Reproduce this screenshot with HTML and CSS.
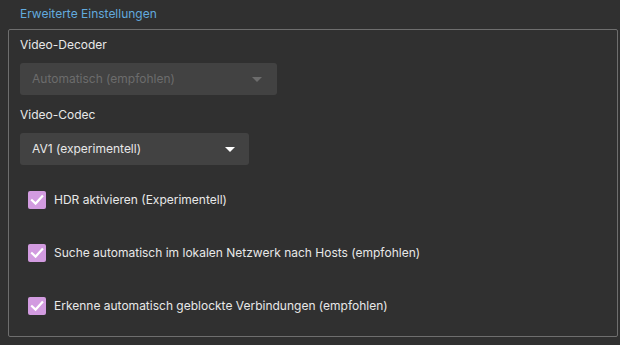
FILE: index.html
```html
<!DOCTYPE html>
<html lang="de">
<head>
<meta charset="utf-8">
<link rel="stylesheet" href="styles.css">
</head>
<body>
<div class="group-title">Erweiterte Einstellungen</div>
<div class="group">
  <div class="field-label">Video-Decoder</div>
  <div class="combo combo-disabled combo-decoder">
    <span class="combo-text">Automatisch (empfohlen)</span>
    <span class="combo-arrow"></span>
  </div>
  <div class="field-label">Video-Codec</div>
  <div class="combo combo-codec">
    <span class="combo-text">AV1 (experimentell)</span>
    <span class="combo-arrow"></span>
  </div>
  <div class="checks">
    <label class="check">
      <span class="box"><svg viewBox="0 0 18 18" width="18" height="18"><path d="M4 9.2 L7.6 12.6 L14.2 5.4" fill="none" stroke="#fff" stroke-width="2.2" stroke-linecap="square"/></svg></span>
      <span class="check-text">HDR aktivieren (Experimentell)</span>
    </label>
    <label class="check">
      <span class="box"><svg viewBox="0 0 18 18" width="18" height="18"><path d="M4 9.2 L7.6 12.6 L14.2 5.4" fill="none" stroke="#fff" stroke-width="2.2" stroke-linecap="square"/></svg></span>
      <span class="check-text">Suche automatisch im lokalen Netzwerk nach Hosts (empfohlen)</span>
    </label>
    <label class="check">
      <span class="box"><svg viewBox="0 0 18 18" width="18" height="18"><path d="M4 9.2 L7.6 12.6 L14.2 5.4" fill="none" stroke="#fff" stroke-width="2.2" stroke-linecap="square"/></svg></span>
      <span class="check-text">Erkenne automatisch geblockte Verbindungen (empfohlen)</span>
    </label>
  </div>
</div>
</body>
</html>
```

FILE: styles.css
```css
html, body {
  margin: 0;
  padding: 0;
  background: #303030;
}
body {
  font-family: Inter, "Noto Sans", sans-serif;
  font-size: 12px;
  line-height: 16px;
  color: #e8e8e8;
  width: 620px;
  height: 345px;
  overflow: hidden;
}
.group-title {
  color: #62aade;
  padding: 6px 0 0 20px;
  box-sizing: border-box;
  height: 29px;
}
.group {
  margin-left: 8px;
  border: 1px solid #6e6e6e;
  border-radius: 2px;
  padding: 7px 0 0 11px;
  display: flex;
  flex-direction: column;
  align-items: flex-start;
  box-sizing: border-box;
  width: 610px;
  height: 308px;
}
.field-label {
  margin-bottom: 10px;
}
.combo {
  display: flex;
  align-items: center;
  justify-content: space-between;
  height: 32px;
  background: #424242;
  border-radius: 3px;
  padding: 0 15px 0 12px;
  box-sizing: border-box;
  margin-bottom: 12px;
}
.combo-decoder { width: 257px; }
.combo-codec { width: 229px; padding-right: 14px; margin-bottom: 0; }
.combo-disabled { color: #6c6c6c; }
.combo-arrow {
  width: 0;
  height: 0;
  border-left: 5px solid transparent;
  border-right: 5px solid transparent;
  border-top: 5px solid #ffffff;
}
.combo-disabled .combo-arrow { border-top-color: #6c6c6c; }
.checks {
  margin-top: 26px;
  margin-left: 8px;
  display: flex;
  flex-direction: column;
  gap: 35px;
}
.check {
  display: flex;
  align-items: center;
  gap: 8px;
  height: 18px;
}
.box {
  width: 18px;
  height: 18px;
  background: #d29be0;
  border-radius: 2px;
  display: block;
}
.box svg { display: block; }
```
